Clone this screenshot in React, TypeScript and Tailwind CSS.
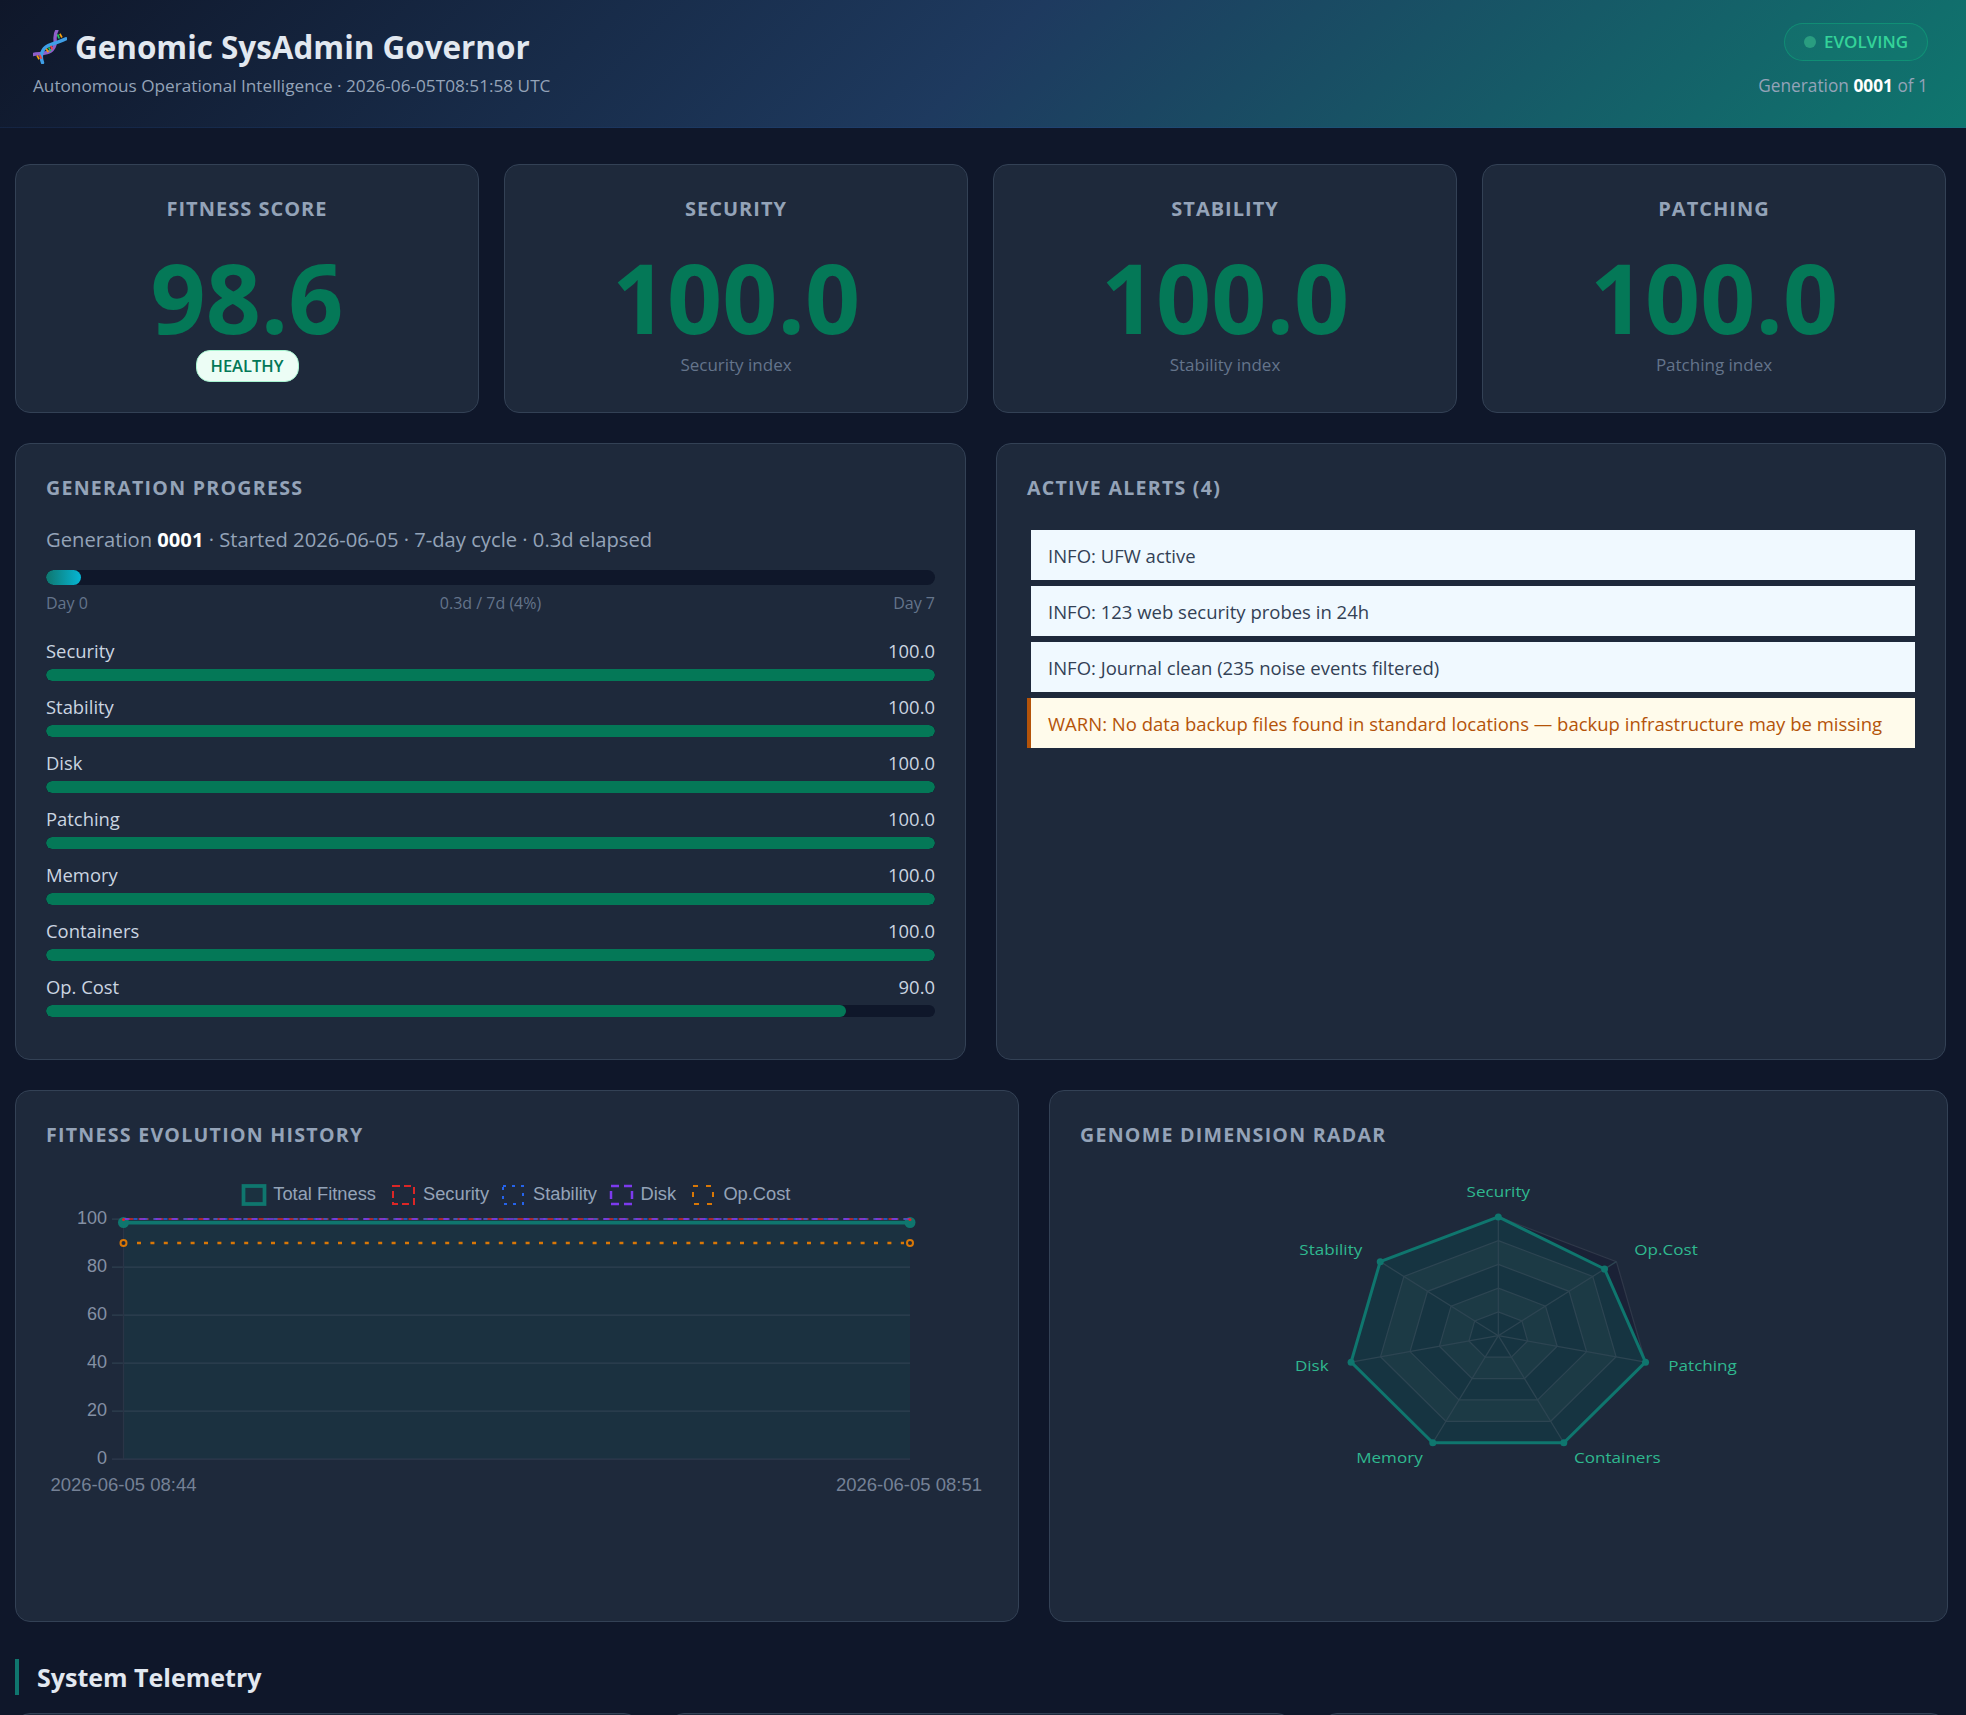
import React from "react";

const radarCenter = { x: 1498.3, y: 1335.7 };
const radarRadiusX = 151;
const radarRadiusY = 118.8;
const radarValues = [100, 90, 100, 100, 100, 100, 100];

function radarPoint(index: number, value: number) {
  const angle = -Math.PI / 2 + (index * 2 * Math.PI) / 7;
  return {
    x: radarCenter.x + ((radarRadiusX * value) / 100) * Math.cos(angle),
    y: radarCenter.y + ((radarRadiusY * value) / 100) * Math.sin(angle),
  };
}

function ringPoints(value: number) {
  return [0, 1, 2, 3, 4, 5, 6]
    .map((i) => {
      const p = radarPoint(i, value);
      return `${p.x.toFixed(1)},${p.y.toFixed(1)}`;
    })
    .join(" ");
}

const dataPoints = radarValues
  .map((v, i) => {
    const p = radarPoint(i, v);
    return `${p.x.toFixed(1)},${p.y.toFixed(1)}`;
  })
  .join(" ");

function DnaIcon() {
  return (
    <svg width="34" height="34" viewBox="40 45 100 100" className="shrink-0" aria-hidden="true">
      <path d="M42 117 C60 112 95 120 104 90 C108 75 100 62 110 47" fill="none" stroke="#8e5fc9" strokeWidth="10" strokeLinecap="round" />
      <path d="M68 141 C60 120 66 100 85 91 C103 82 120 80 137 71" fill="none" stroke="#3f9ee6" strokeWidth="10" strokeLinecap="round" />
      <g strokeWidth="5" strokeLinecap="butt">
        <path d="M52 120 L58 131" stroke="#f59e0b" />
        <path d="M60 118 L65 130" stroke="#ef4444" />
        <path d="M79 100 L85 110" stroke="#f59e0b" />
        <path d="M86 96 L92 107" stroke="#22c55e" />
        <path d="M92 92 L97 102" stroke="#ef4444" />
        <path d="M112 58 L117 70" stroke="#22c55e" />
        <path d="M119 56 L125 67" stroke="#f59e0b" />
      </g>
    </svg>
  );
}

function StatCard({ label, value, sub, badge }: { label: string; value: string; sub?: string; badge?: string }) {
  return (
    <div className="h-[249px] rounded-[15px] border border-[#334155] bg-[#1e293b] pt-[31px] text-center">
      <div className="text-[20px] leading-[26px] font-bold tracking-[1px] text-[#94a3b8]">{label}</div>
      <div className="mt-[25px] text-[96.5px] leading-[100px] font-bold text-[#047857]">{value}</div>
      <div className="mt-[3px] flex h-[32px] items-center justify-center">
        {badge ? (
          <span className="flex h-[32px] w-[103px] items-center justify-center rounded-[14px] border border-[#a7f3d0] bg-[#ecfdf5] text-[16.5px] font-semibold text-[#047857]">
            {badge}
          </span>
        ) : (
          <span className="-translate-y-[1px] text-[17px] text-[#64748b]">{sub}</span>
        )}
      </div>
    </div>
  );
}

function Meter({ label, value, pct }: { label: string; value: string; pct: number }) {
  return (
    <div>
      <div className="flex h-[24px] items-center justify-between text-[18.4px] leading-[24px] text-[#cbd5e1]">
        <span>{label}</span>
        <span>{value}</span>
      </div>
      <div className="mt-[6px] h-[12px] overflow-hidden rounded-[6px] bg-[#0f172a]">
        <div className="h-full rounded-[6px] bg-[#047857]" style={{ width: `${pct}%` }} />
      </div>
    </div>
  );
}

function PanelTitle({ children }: { children: React.ReactNode }) {
  return <div className="text-[19.6px] leading-[28px] font-bold tracking-[1.25px] text-[#94a3b8]">{children}</div>;
}

function Alert({ text, warn }: { text: string; warn?: boolean }) {
  return (
    <div
      className={
        warn
          ? "flex h-[50px] items-center border-l-[4px] border-[#b45309] bg-[#fffbeb] pl-[17px] pt-[1px] text-[18.5px] text-[#b45309]"
          : "flex h-[50px] items-center border-l-[4px] border-[#1e293b] bg-[#f0f9ff] pl-[17px] pt-[1px] text-[18.5px] text-[#334155]"
      }
    >
      {text}
    </div>
  );
}

function LegendBox({ x, w, color, dash, sw, fill }: { x: number; w: number; color: string; dash?: string; sw: number; fill?: string }) {
  return <rect x={x} y={1186} width={w} height={18} fill={fill ?? "none"} stroke={color} strokeWidth={sw} strokeDasharray={dash} />;
}

function EvolutionChart() {
  const ticks = [
    { label: "100", y: 1219 },
    { label: "80", y: 1267 },
    { label: "60", y: 1315 },
    { label: "40", y: 1363 },
    { label: "20", y: 1411 },
    { label: "0", y: 1459 },
  ];
  const legend = [
    { t: "Total Fitness", x: 273.3 },
    { t: "Security", x: 423 },
    { t: "Stability", x: 533 },
    { t: "Disk", x: 640.6 },
    { t: "Op.Cost", x: 723.4 },
  ];
  return (
    <svg width="954" height="340" viewBox="46 1170 954 340" className="mt-[21px] block" style={{ fontFamily: '"Liberation Sans", Arial, sans-serif' }}>
      <rect x="123.5" y="1222" width="786.5" height="237" fill="#1b3140" />
      {ticks.map((t) => (
        <g key={t.label}>
          <line x1="112" x2="910" y1={t.y} y2={t.y} stroke={t.y === 1459 ? "#2f3a4e" : "#2f4150"} strokeWidth="1.25" />
          <text x="107" y={t.y + 5} textAnchor="end" fontSize="18" fill="#8490a4">
            {t.label}
          </text>
        </g>
      ))}
      <line x1="123.5" x2="123.5" y1="1219" y2="1459" stroke="#2a3547" strokeWidth="1.25" />
      <line x1="123.5" x2="910" y1="1222.5" y2="1222.5" stroke="#0f766e" strokeWidth="3.75" />
      <circle cx="123.5" cy="1222.5" r="5.5" fill="#0f766e" />
      <circle cx="910" cy="1222.5" r="5.5" fill="#0f766e" />
      <line x1="123.5" x2="910" y1="1219" y2="1219" stroke="#1e293b" strokeWidth="1.5" />
      <line x1="123.5" x2="910" y1="1219" y2="1219" stroke="#dc2626" strokeWidth="1.5" strokeDasharray="10 5" />
      <line x1="123.5" x2="910" y1="1219" y2="1219" stroke="#2563eb" strokeWidth="1.5" strokeDasharray="4 6" />
      <line x1="123.5" x2="910" y1="1219" y2="1219" stroke="#7c3aed" strokeWidth="1.5" strokeDasharray="6 10" />
      <circle cx="123.5" cy="1219.5" r="1.5" fill="#dc2626" />
      <circle cx="910" cy="1219.5" r="1.5" fill="#dc2626" />
      <line x1="137" x2="904" y1="1243" y2="1243" stroke="#d97706" strokeWidth="2.5" strokeDasharray="4 9.4" />
      <circle cx="123.5" cy="1243" r="3" fill="#1e293b" stroke="#d97706" strokeWidth="2" />
      <circle cx="910" cy="1243" r="3" fill="#1e293b" stroke="#d97706" strokeWidth="2" />
      <text x="123.5" y="1491" textAnchor="middle" fontSize="18.5" fill="#758196">
        2026-06-05 08:44
      </text>
      <text x="909" y="1491" textAnchor="middle" fontSize="18.5" fill="#758196">
        2026-06-05 08:51
      </text>
      <LegendBox x={243.5} w={21} color="#0f766e" sw={3.75} fill="#1b3140" />
      <LegendBox x={393} w={21} color="#dc2626" dash="7 4" sw={2} />
      <LegendBox x={503} w={20} color="#2563eb" dash="3 6" sw={2} />
      <LegendBox x={611} w={21} color="#7c3aed" dash="8 5" sw={2.5} />
      <LegendBox x={693} w={20} color="#d97706" dash="5 8" sw={2} />
      {legend.map((l) => (
        <text key={l.t} x={l.x} y={1200} fontSize="18.3" fill="#94a3b8">
          {l.t}
        </text>
      ))}
    </svg>
  );
}

function RadarChart() {
  const labels = [
    { t: "Security", x: 1498.3, y: 1192.3, a: "middle" },
    { t: "Op.Cost", x: 1634.3, y: 1250.3, a: "start" },
    { t: "Patching", x: 1668.3, y: 1365.7, a: "start" },
    { t: "Containers", x: 1574, y: 1457.7, a: "start" },
    { t: "Memory", x: 1422.7, y: 1457.7, a: "end" },
    { t: "Disk", x: 1328.7, y: 1365.7, a: "end" },
    { t: "Stability", x: 1362.3, y: 1250.3, a: "end" },
  ] as const;
  return (
    <svg width="836" height="340" viewBox="1080 1170 836 340" className="mt-[21px] block" style={{ fontFamily: '"Open Sans", sans-serif' }}>
      <polygon points={ringPoints(100)} fill="#1a2136" stroke="#2f3849" strokeWidth="1.25" />
      <polygon points={dataPoints} fill="#163441" />
      <polygon points={ringPoints(80)} fill="#1c3a45" stroke="#2d4552" strokeWidth="1.25" />
      <polygon points={ringPoints(60)} fill="#163441" stroke="#2d4552" strokeWidth="1.25" />
      <polygon points={ringPoints(40)} fill="#1c3a45" stroke="#2d4552" strokeWidth="1.25" />
      <polygon points={ringPoints(20)} fill="#163441" stroke="#2d4552" strokeWidth="1.25" />
      {radarValues.map((v, i) => {
        const p = radarPoint(i, 100);
        return <line key={i} x1={radarCenter.x} y1={radarCenter.y} x2={p.x} y2={p.y} stroke="#2d4552" strokeWidth="1.25" />;
      })}
      <polygon points={dataPoints} fill="none" stroke="#0f766e" strokeWidth="3" />
      {radarValues.map((v, i) => {
        const p = radarPoint(i, v);
        return <circle key={i} cx={p.x} cy={p.y} r="3.5" fill="#0f766e" />;
      })}
      {labels.map((l) => (
        <text key={l.t} transform={`translate(${l.x} ${l.y + 5}) scale(1.22 1)`} textAnchor={l.a} fontSize="14" fill="#2fb88f">
          {l.t}
        </text>
      ))}
    </svg>
  );
}

export default function App() {
  return (
    <div className="h-[1715px] overflow-hidden bg-[#0f172a] font-['Open_Sans',sans-serif] text-[#e2e8f0]">
      <header className="flex h-[128px] items-start justify-between border-b border-[rgba(59,130,246,0.12)] bg-[linear-gradient(135deg,#0f172a_0%,#1e3a5f_50%,#0f766e_100%)] px-[33px]">
        <div>
          <div className="mt-[26px] flex h-[42px] items-center">
            <DnaIcon />
            <h1 className="ml-[8px] text-[31.4px] leading-[42px] font-bold text-[#e2e8f0]">Genomic SysAdmin Governor</h1>
          </div>
          <p className="mt-[6px] text-[17.2px] leading-[24px] text-[#94a3b8]">Autonomous Operational Intelligence · 2026-06-05T08:51:58 UTC</p>
        </div>
        <div className="mr-[5px] flex flex-col items-end">
          <div className="mt-[23px] flex h-[38px] w-[144px] items-center justify-center rounded-[19px] border border-[rgba(16,185,129,0.4)] bg-[rgba(16,185,129,0.1)]">
            <span className="h-[12px] w-[12px] rounded-full bg-[#2a9d80]" />
            <span className="ml-[8px] text-[17px] font-semibold text-[#34d399]">EVOLVING</span>
          </div>
          <p className="mt-[13px] text-[17.3px] leading-[24px] text-[#94a3b8]">
            Generation <strong className="font-bold text-white">0001</strong> of 1
          </p>
        </div>
      </header>

      <main className="px-[15px] pt-[36px]">
        <section className="grid grid-cols-4 gap-[25px] pr-[5px]">
          <StatCard label="FITNESS SCORE" value="98.6" badge="HEALTHY" />
          <StatCard label="SECURITY" value="100.0" sub="Security index" />
          <StatCard label="STABILITY" value="100.0" sub="Stability index" />
          <StatCard label="PATCHING" value="100.0" sub="Patching index" />
        </section>

        <section className="mt-[30px] grid grid-cols-[951px_950px] gap-[30px]">
          <div className="rounded-[15px] border border-[#334155] bg-[#1e293b] px-[30px] pt-[30px] pb-[42px]">
            <PanelTitle>GENERATION PROGRESS</PanelTitle>
            <p className="mt-[22px] text-[20.2px] leading-[30px] text-[#94a3b8]">
              Generation <strong className="font-bold text-white">0001</strong> · Started 2026-06-05 · 7-day cycle · 0.3d elapsed
            </p>
            <div className="mt-[16px] h-[15px] overflow-hidden rounded-[8px] bg-[#0f172a]">
              <div className="h-full w-[35px] rounded-[8px] bg-[linear-gradient(90deg,#0f766e,#06b6d4)]" />
            </div>
            <div className="mt-[8px] flex justify-between text-[16px] leading-[20px] text-[#64748b]">
              <span>Day 0</span>
              <span>0.3d / 7d (4%)</span>
              <span>Day 7</span>
            </div>
            <div className="mt-[26px] flex flex-col gap-[14px]">
              <Meter label="Security" value="100.0" pct={100} />
              <Meter label="Stability" value="100.0" pct={100} />
              <Meter label="Disk" value="100.0" pct={100} />
              <Meter label="Patching" value="100.0" pct={100} />
              <Meter label="Memory" value="100.0" pct={100} />
              <Meter label="Containers" value="100.0" pct={100} />
              <Meter label="Op. Cost" value="90.0" pct={90} />
            </div>
          </div>

          <div className="rounded-[15px] border border-[#334155] bg-[#1e293b] px-[30px] pt-[30px]">
            <PanelTitle>ACTIVE ALERTS (4)</PanelTitle>
            <div className="mt-[28px] flex flex-col gap-[6px]">
              <Alert text="INFO: UFW active" />
              <Alert text="INFO: 123 web security probes in 24h" />
              <Alert text="INFO: Journal clean (235 noise events filtered)" />
              <Alert text="WARN: No data backup files found in standard locations — backup infrastructure may be missing" warn />
            </div>
          </div>
        </section>

        <section className="mt-[30px] grid grid-cols-[1004px_899px] gap-[30px]">
          <div className="h-[532px] overflow-hidden rounded-[15px] border border-[#334155] bg-[#1e293b] px-[30px] pt-[30px]">
            <PanelTitle>FITNESS EVOLUTION HISTORY</PanelTitle>
            <EvolutionChart />
          </div>
          <div className="h-[532px] overflow-hidden rounded-[15px] border border-[#334155] bg-[#1e293b] px-[30px] pt-[30px]">
            <PanelTitle>GENOME DIMENSION RADAR</PanelTitle>
            <RadarChart />
          </div>
        </section>

        <h2 className="mt-[37px] border-l-[4px] border-[#0f766e] pl-[18px] text-[25px] leading-[36px] font-bold text-[#e2e8f0]">System Telemetry</h2>

        <section className="mt-[18px] grid grid-cols-3 gap-[30px] pr-[5px]">
          <div className="h-[200px] rounded-[15px] border border-[#334155] bg-[#1e293b]" />
          <div className="h-[200px] rounded-[15px] border border-[#334155] bg-[#1e293b]" />
          <div className="h-[200px] rounded-[15px] border border-[#334155] bg-[#1e293b]" />
        </section>
      </main>
    </div>
  );
}
